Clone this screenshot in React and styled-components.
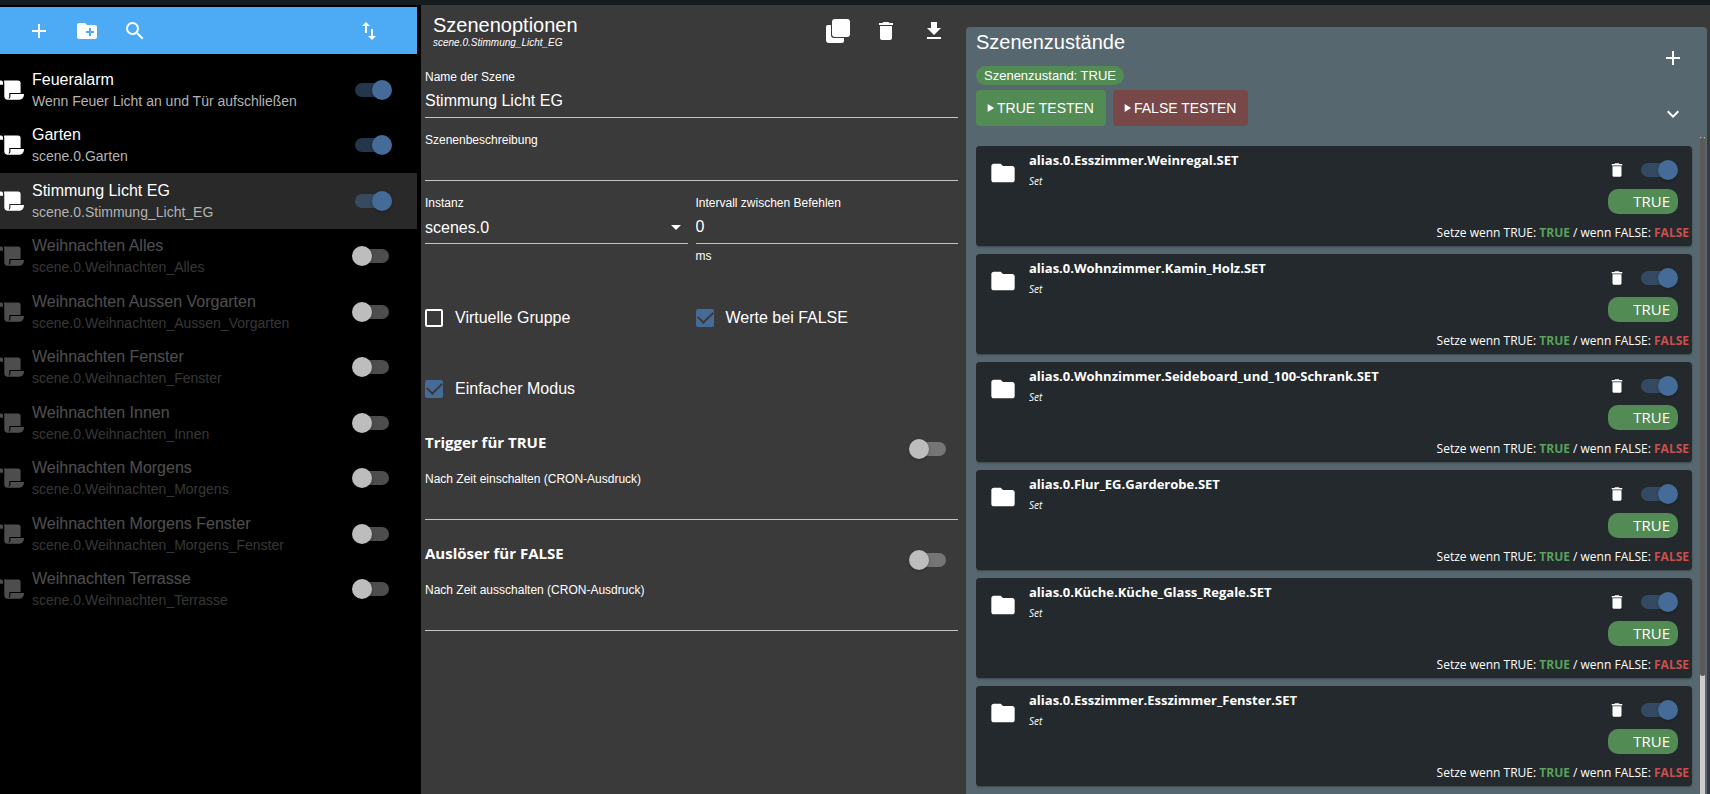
import { useState } from "react";
import styled, { createGlobalStyle } from "styled-components";
import {
  MdAdd,
  MdArrowDropDown,
  MdCreateNewFolder,
  MdDelete,
  MdExpandMore,
  MdFileDownload,
  MdFolder,
  MdImportExport,
  MdPlayArrow,
  MdSearch,
} from "react-icons/md";

const GlobalStyle = createGlobalStyle`
  * {
    box-sizing: border-box;
  }
  body {
    margin: 0;
    background: #3a3a3a;
    color: #ffffff;
    font-family: "Liberation Sans", Arial, sans-serif;
  }
  button, input, select {
    font-family: inherit;
    color: inherit;
  }
`;

const Page = styled.div`
  display: flex;
  flex-direction: column;
  height: 100vh;
  overflow: hidden;
`;
const TopBar = styled.div`
  flex: none;
  height: 5px;
  background: #151c20;
`;
const Columns = styled.div`
  flex: 1;
  min-height: 0;
  display: grid;
  grid-template-columns: 421px 545fr 744fr;
`;

const IconButton = styled.button`
  flex: none;
  display: flex;
  justify-content: center;
  align-items: center;
  width: ${(props) => props.$width || 48}px;
  height: ${(props) => props.$height || 48}px;
  padding: 0;
  border: none;
  background: none;
  cursor: pointer;
`;
const Spacer = styled.div`
  flex: 1;
`;
const Switch = styled.input.attrs({ type: "checkbox", role: "switch" })`
  appearance: none;
  flex: none;
  display: grid;
  align-items: center;
  width: 40px;
  height: 20px;
  margin: 0;
  cursor: pointer;
  &::before {
    content: "";
    grid-area: 1 / 1;
    justify-self: center;
    width: 34px;
    height: 14px;
    border-radius: 7px;
    background: ${(props) =>
      props.checked ? "rgba(69, 108, 152, 0.5)" : "rgba(255, 255, 255, 0.3)"};
  }
  &::after {
    content: "";
    grid-area: 1 / 1;
    justify-self: ${(props) => (props.checked ? "end" : "start")};
    width: 20px;
    height: 20px;
    border-radius: 50%;
    background: ${(props) => (props.checked ? "#456c98" : "#bdbdbd")};
    box-shadow: 0 1px 3px rgba(0, 0, 0, 0.3);
  }
`;

const Sidebar = styled.aside`
  padding: 2px 4px 0 0;
  background: #000000;
`;
const Toolbar = styled.div`
  display: flex;
  align-items: center;
  height: 47px;
  padding: 0 24px 0 15px;
  background: #4dabf5;
`;
const SceneList = styled.ul`
  display: grid;
  grid-auto-rows: 1fr;
  height: 555px;
  margin: 8px 0 0;
  padding: 0;
  list-style: none;
`;
const SceneRow = styled.li`
  display: flex;
  align-items: center;
  padding-right: 25px;
  background: ${(props) => (props.$selected ? "#292929" : "transparent")};
`;
const SceneIcon = styled.svg`
  flex: none;
  width: 24px;
  height: 20px;
  fill: currentColor;
  opacity: ${(props) => (props.$dim ? 0.3 : 1)};
`;
const SceneText = styled.div`
  flex: 1;
  margin-left: 8px;
  opacity: ${(props) => (props.$dim ? 0.3 : 1)};
`;
const SceneName = styled.div`
  font-size: 16px;
  line-height: 22px;
`;
const SceneId = styled.div`
  font-size: 14px;
  line-height: 20px;
  color: #b3b3b3;
`;

const Options = styled.section`
  padding: 0 8px 0 4px;
`;
const OptionsHeader = styled.header`
  display: flex;
  align-items: center;
  height: 50px;
  padding: 2px 0 0 8px;
`;
const Title = styled.h2`
  margin: 0;
  font-size: 20px;
  line-height: 24px;
  font-weight: 400;
`;
const Subtitle = styled.div`
  font-size: 10px;
  line-height: 12px;
  font-style: italic;
`;
const Field = styled.div`
  display: flex;
  flex-direction: column;
  height: 63px;
  padding-top: 14px;
  border-bottom: 1px solid #c4c4c4;
`;
const Label = styled.label`
  display: block;
  font-size: 12px;
  line-height: 16px;
`;
const TextInput = styled.input`
  width: 100%;
  height: 32px;
  padding: 0;
  border: none;
  outline: none;
  background: none;
  font-size: 16px;
`;
const SelectWrapper = styled.div`
  display: flex;
  align-items: center;
`;
const Select = styled.select`
  appearance: none;
  flex: 1;
  height: 32px;
  margin-right: -24px;
  padding: 0;
  border: none;
  outline: none;
  background: none;
  font-size: 16px;
`;
const DropIcon = styled(MdArrowDropDown)`
  width: 24px;
  height: 24px;
  pointer-events: none;
`;
const TwoColumns = styled.div`
  display: grid;
  grid-template-columns: 1fr 1fr;
  column-gap: 8px;
`;
const Helper = styled.div`
  margin-top: 4px;
  font-size: 12px;
  line-height: 16px;
`;
const Checks = styled(TwoColumns)`
  margin-top: 18px;
`;
const CheckLabel = styled.label`
  display: flex;
  align-items: center;
  gap: 12px;
  height: 71px;
  font-size: 16px;
`;
const CheckInput = styled.input.attrs({ type: "checkbox" })`
  appearance: none;
  display: grid;
  place-items: center;
  width: 18px;
  height: 18px;
  margin: 0;
  border: 2px solid ${(props) => (props.checked ? "#456c98" : "#ffffff")};
  border-radius: 2px;
  background: ${(props) => (props.checked ? "#456c98" : "transparent")};
  &::before {
    content: "";
    display: ${(props) => (props.checked ? "block" : "none")};
    width: 13px;
    height: 7px;
    margin-bottom: 4px;
    border: solid #3a3a3a;
    border-width: 0 0 2px 2px;
    transform: rotate(-45deg);
  }
`;
const Triggers = styled.div`
  margin-top: -15px;
`;
const Trigger = styled.div`
  height: 111px;
  border-bottom: 1px solid #c4c4c4;
`;
const TriggerHeader = styled.div`
  display: flex;
  justify-content: space-between;
  align-items: flex-start;
  height: 62px;
  padding: 23px 9px 0 0;
`;
const TriggerTitle = styled.h3`
  margin: 0;
  font-family: "Open Sans", "Noto Sans", sans-serif;
  font-size: 15px;
  line-height: 20px;
  font-weight: 700;
`;
const TriggerSwitch = styled(Switch)`
  margin-top: 7px;
`;

const States = styled.section`
  display: flex;
  flex-direction: column;
  min-height: 0;
  margin: 22px 3px 0 0;
  border-radius: 4px 4px 0 0;
  background: #57676f;
`;
const StatesHeader = styled.header`
  display: flex;
  justify-content: space-between;
  height: 110px;
  padding: 3px 10px 0;
`;
const HeaderActions = styled.div`
  display: flex;
  flex-direction: column;
`;
const Chip = styled.div`
  width: fit-content;
  margin: 12px 0 5px;
  padding: 0 8px;
  border-radius: 10px;
  background: #528c54;
  font-size: 13px;
  line-height: 19px;
`;
const TestButtons = styled.div`
  display: flex;
  gap: 7px;
`;
const TestButton = styled.button`
  display: flex;
  align-items: center;
  height: 36px;
  padding: 0 12px 0 7px;
  border: none;
  border-radius: 4px;
  background: ${(props) => props.$color};
  font-size: 14px;
  cursor: pointer;
`;
const StatesBody = styled.div`
  flex: 1;
  display: flex;
  min-height: 0;
  padding: 0 2px 0 10px;
`;
const CardList = styled.div`
  flex: 1;
  display: flex;
  flex-direction: column;
  gap: 8px;
  padding: 9px 8px 0 0;
  overflow: hidden;
`;
const ScrollTrack = styled.div`
  flex: none;
  width: 5px;
  background: #cccccc;
`;
const ScrollThumb = styled.div`
  height: 82%;
  border-radius: 3px;
  background: #5a5a5a;
`;
const Card = styled.article`
  flex: none;
  display: flex;
  justify-content: space-between;
  height: 100px;
  padding: 4px 3px 0 13px;
  border-radius: 4px;
  background: #23292c;
  box-shadow: 0 1px 2px rgba(0, 0, 0, 0.35);
  font-family: "Open Sans", "Noto Sans", sans-serif;
`;
const CardMain = styled.div`
  display: flex;
  gap: 12px;
`;
const FolderIcon = styled(MdFolder)`
  flex: none;
  width: 28px;
  height: 28px;
  margin-top: 9px;
`;
const CardTitle = styled.h3`
  margin: 0;
  font-size: 13px;
  line-height: 20px;
  font-weight: 700;
`;
const CardNote = styled.div`
  margin-top: 3px;
  font-size: 10px;
  line-height: 16px;
  font-style: italic;
`;
const CardSide = styled.div`
  display: flex;
  flex-direction: column;
  align-items: flex-end;
`;
const CardActions = styled.div`
  display: flex;
  align-items: center;
  height: 39px;
  padding-right: 11px;
`;
const Pill = styled.div`
  width: 70px;
  margin-right: 11px;
  padding-right: 8px;
  border-radius: 10px;
  background: #528c54;
  font-size: 15px;
  line-height: 25px;
  text-align: right;
`;
const CardFooter = styled.div`
  margin-top: 9px;
  font-size: 12px;
  line-height: 20px;
`;
const Value = styled.b`
  color: ${(props) => (props.$on ? "#5ba05d" : "#c9504e")};
`;

const scenes = [
  { name: "Feueralarm", id: "Wenn Feuer Licht an und Tür aufschließen", on: true },
  { name: "Garten", id: "scene.0.Garten", on: true },
  { name: "Stimmung Licht EG", id: "scene.0.Stimmung_Licht_EG", on: true },
  { name: "Weihnachten Alles", id: "scene.0.Weihnachten_Alles", on: false },
  { name: "Weihnachten Aussen Vorgarten", id: "scene.0.Weihnachten_Aussen_Vorgarten", on: false },
  { name: "Weihnachten Fenster", id: "scene.0.Weihnachten_Fenster", on: false },
  { name: "Weihnachten Innen", id: "scene.0.Weihnachten_Innen", on: false },
  { name: "Weihnachten Morgens", id: "scene.0.Weihnachten_Morgens", on: false },
  { name: "Weihnachten Morgens Fenster", id: "scene.0.Weihnachten_Morgens_Fenster", on: false },
  { name: "Weihnachten Terrasse", id: "scene.0.Weihnachten_Terrasse", on: false },
];

const members = [
  "alias.0.Esszimmer.Weinregal.SET",
  "alias.0.Wohnzimmer.Kamin_Holz.SET",
  "alias.0.Wohnzimmer.Seideboard_und_100-Schrank.SET",
  "alias.0.Flur_EG.Garderobe.SET",
  "alias.0.Küche.Küche_Glass_Regale.SET",
  "alias.0.Esszimmer.Esszimmer_Fenster.SET",
];

const CloneIcon = () => (
  <svg width="24" height="24" viewBox="0 0 24 24" fill="currentColor">
    <rect x="6" y="0" width="18" height="18" rx="3" />
    <path d="M0 8a2 2 0 0 1 2-2h3v10a3 3 0 0 0 3 3h10v3a2 2 0 0 1-2 2H3a3 3 0 0 1-3-3z" />
  </svg>
);

const ScrollIcon = ({ dim }) => (
  <SceneIcon viewBox="0 0 24 20" $dim={dim}>
    <path d="M0 .5h1.2A1.8 1.8 0 0 1 3 2.3v2.4H0z" />
    <path d="M4 .4h14a2.6 2.6 0 0 1 2.6 2.6v10.1H9.3v3.4c0 .8-.3 1.3-.8 1.7l.5.5c.9-.5 1.4-1.3 1.4-2.3v-2.3H24c0 3.200-1.700 5.600-4.500 5.600H7.700C5.500 19.700 4.300 18.200 4.300 16.200V3.600z" />
  </SceneIcon>
);

const SceneItem = ({ scene, selected }) => {
  const [on, setOn] = useState(scene.on);

  return (
    <SceneRow $selected={selected}>
      <ScrollIcon dim={!on} />
      <SceneText $dim={!on}>
        <SceneName>{scene.name}</SceneName>
        <SceneId>{scene.id}</SceneId>
      </SceneText>
      <Switch
        checked={on}
        onChange={() => setOn(!on)}
        aria-label={scene.name}
      />
    </SceneRow>
  );
};

const Check = ({ label, initial }) => {
  const [checked, setChecked] = useState(initial);

  return (
    <CheckLabel>
      <CheckInput checked={checked} onChange={() => setChecked(!checked)} />
      {label}
    </CheckLabel>
  );
};

const TriggerBlock = ({ id, title, label }) => {
  const [on, setOn] = useState(false);

  return (
    <Trigger>
      <TriggerHeader>
        <TriggerTitle>{title}</TriggerTitle>
        <TriggerSwitch
          checked={on}
          onChange={() => setOn(!on)}
          aria-label={title}
        />
      </TriggerHeader>
      <Label htmlFor={id}>{label}</Label>
      <TextInput id={id} />
    </Trigger>
  );
};

const MemberCard = ({ name }) => {
  const [on, setOn] = useState(true);

  return (
    <Card>
      <CardMain>
        <FolderIcon />
        <div>
          <CardTitle>{name}</CardTitle>
          <CardNote>Set</CardNote>
        </div>
      </CardMain>
      <CardSide>
        <CardActions>
          <IconButton $width={42} $height={38} aria-label="Löschen">
            <MdDelete size={18} />
          </IconButton>
          <Switch checked={on} onChange={() => setOn(!on)} aria-label={name} />
        </CardActions>
        <Pill>TRUE</Pill>
        <CardFooter>
          Setze wenn TRUE: <Value $on>TRUE</Value> / wenn FALSE:{" "}
          <Value>FALSE</Value>
        </CardFooter>
      </CardSide>
    </Card>
  );
};

const App = () => {
  return (
    <>
      <GlobalStyle />
      <Page>
        <TopBar />
        <Columns>
          <Sidebar>
            <Toolbar>
              <IconButton aria-label="Neue Szene">
                <MdAdd size={24} />
              </IconButton>
              <IconButton aria-label="Neuer Ordner">
                <MdCreateNewFolder size={24} />
              </IconButton>
              <IconButton aria-label="Suchen">
                <MdSearch size={24} />
              </IconButton>
              <Spacer />
              <IconButton aria-label="Sortieren">
                <MdImportExport size={24} />
              </IconButton>
            </Toolbar>
            <SceneList>
              {scenes.map((scene, index) => (
                <SceneItem
                  key={scene.name}
                  scene={scene}
                  selected={index === 2}
                />
              ))}
            </SceneList>
          </Sidebar>

          <Options>
            <OptionsHeader>
              <div>
                <Title>Szenenoptionen</Title>
                <Subtitle>scene.0.Stimmung_Licht_EG</Subtitle>
              </div>
              <Spacer />
              <IconButton aria-label="Duplizieren">
                <CloneIcon />
              </IconButton>
              <IconButton aria-label="Löschen">
                <MdDelete size={24} />
              </IconButton>
              <IconButton aria-label="Exportieren">
                <MdFileDownload size={24} />
              </IconButton>
            </OptionsHeader>
            <Field>
              <Label htmlFor="name">Name der Szene</Label>
              <TextInput id="name" defaultValue="Stimmung Licht EG" />
            </Field>
            <Field>
              <Label htmlFor="description">Szenenbeschreibung</Label>
              <TextInput id="description" />
            </Field>
            <TwoColumns>
              <Field>
                <Label htmlFor="instance">Instanz</Label>
                <SelectWrapper>
                  <Select id="instance" defaultValue="scenes.0">
                    <option>scenes.0</option>
                  </Select>
                  <DropIcon />
                </SelectWrapper>
              </Field>
              <div>
                <Field>
                  <Label htmlFor="interval">Intervall zwischen Befehlen</Label>
                  <TextInput id="interval" defaultValue="0" />
                </Field>
                <Helper>ms</Helper>
              </div>
            </TwoColumns>
            <Checks>
              <Check label="Virtuelle Gruppe" initial={false} />
              <Check label="Werte bei FALSE" initial />
              <Check label="Einfacher Modus" initial />
            </Checks>
            <Triggers>
              <TriggerBlock
                id="cron-true"
                title="Trigger für TRUE"
                label="Nach Zeit einschalten (CRON-Ausdruck)"
              />
              <TriggerBlock
                id="cron-false"
                title="Auslöser für FALSE"
                label="Nach Zeit ausschalten (CRON-Ausdruck)"
              />
            </Triggers>
          </Options>

          <States>
            <StatesHeader>
              <div>
                <Title>Szenenzustände</Title>
                <Chip>Szenenzustand: TRUE</Chip>
                <TestButtons>
                  <TestButton $color="#528c54">
                    <MdPlayArrow size={14} />
                    TRUE TESTEN
                  </TestButton>
                  <TestButton $color="#784747">
                    <MdPlayArrow size={14} />
                    FALSE TESTEN
                  </TestButton>
                </TestButtons>
              </div>
              <HeaderActions>
                <IconButton $height={56} aria-label="Hinzufügen">
                  <MdAdd size={24} />
                </IconButton>
                <IconButton $height={56} aria-label="Aufklappen">
                  <MdExpandMore size={24} />
                </IconButton>
              </HeaderActions>
            </StatesHeader>
            <StatesBody>
              <CardList>
                {members.map((name) => (
                  <MemberCard key={name} name={name} />
                ))}
              </CardList>
              <ScrollTrack>
                <ScrollThumb />
              </ScrollTrack>
            </StatesBody>
          </States>
        </Columns>
      </Page>
    </>
  );
};

export default App;
